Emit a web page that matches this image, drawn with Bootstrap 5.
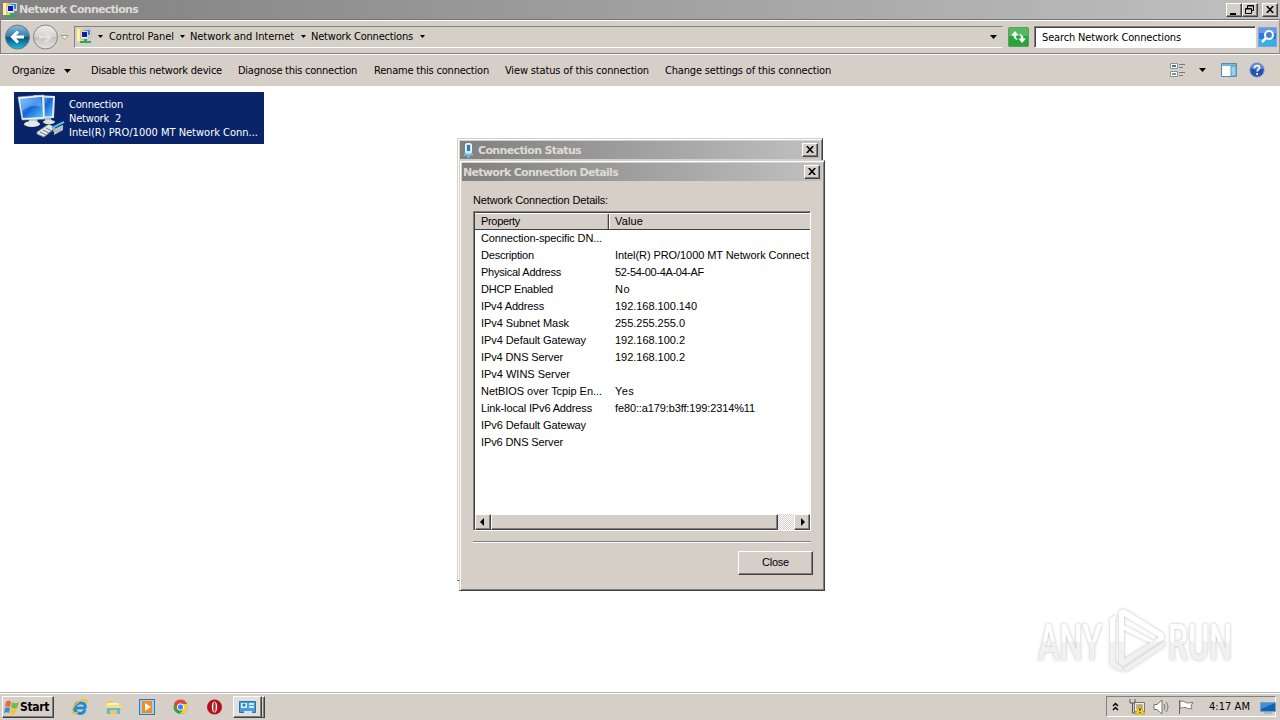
<!DOCTYPE html>
<html lang="en">
<head>
  <meta charset="UTF-8"/>
  <title>Network Connections</title>
  <meta name="viewport" content="width=device-width, initial-scale=1"/>
  <link href="https://cdn.jsdelivr.net/npm/bootstrap@5.3.0/dist/css/bootstrap.min.css" rel="stylesheet"/>
  <style>
    :root { --face: #d5cfc8; --dark: #404040; --mid: #808080; }
    body { width: 1280px; height: 720px; background: #fff; color: #000; font: 11px/14px "DejaVu Sans Condensed", "DejaVu Sans", sans-serif; }
    svg { display: block; flex: none; }
    [data-w] { display: inline-block; white-space: pre; flex: none; }
    .face { background: var(--face); }
    .caption { background: linear-gradient(90deg, #808080, #c0c0c0); color: #dedbd5; font: bold 11px/18px "DejaVu Sans", sans-serif; }
    .main-caption { height: 19px; padding-right: 2px; }
    .cap-btn { width: 16px; height: 14px; padding: 0; border-radius: 0; background: var(--face); border: 1px solid; border-color: #fff var(--dark) var(--dark) #fff; box-shadow: inset -1px -1px var(--mid); }
    .cap-btn svg { margin: auto; }
    .nav-row { height: 35px; border: 1px solid var(--mid); border-top-color: #77736f; border-right-color: #999; box-shadow: inset 0 1px #fff; padding: 0 2px 0 4px; }
    .address { width: 929px; height: 22px; margin-left: 4px; border: 1px solid; border-color: var(--mid) transparent #fff var(--mid); padding-left: 1px; background: #d5d0c6; }
    .search-box { width: 222px; height: 22px; margin-left: 5px; border: 1px solid; border-color: var(--mid) #fff #fff var(--mid); box-shadow: inset 1px 1px var(--dark); background: #fff; padding: 2px 0 0 7px; }
    .tool-row { height: 32px; border-top: 1px solid #fff; padding-left: 12px; padding-right: 15px; }
    .conn-tile { width: 250px; height: 52px; margin: 6px 0 0 14px; background: #0a246a; color: #fff; padding: 6px 0 0 3px; }
    .task-row { height: 28px; border-top: 1px solid #b9b5af; box-shadow: inset 0 1px #fff; padding: 3px 4px 2px 2px; }
    .raised { border: 1px solid; border-color: #fff var(--dark) var(--dark) #fff; box-shadow: inset -1px -1px var(--mid); background: var(--face); border-radius: 0; color: #000; }
    .start-btn { width: 52px; height: 22px; padding: 0; font: bold 12px/18px "DejaVu Sans Condensed", sans-serif; }
    .active-task { width: 29px; height: 22px; background: #e3dfda; }
    .stack-edge { width: 3px; height: 22px; border-right: 1px solid var(--dark); border-top: 1px solid #fff; border-bottom: 1px solid var(--dark); box-shadow: inset -1px 0 var(--mid); }
    .tray { width: 170px; height: 21px; border: 1px solid; border-color: var(--mid) #fff #fff var(--mid); }
    /* floating windows */
    .win { position: absolute; border: 1px solid; border-color: #d4d0c8 var(--dark) var(--dark) #d4d0c8; box-shadow: inset 1px 1px #fff, inset -1px -1px var(--mid); background: var(--face); padding: 2px; }
    .win-status { left: 457px; top: 138px; width: 366px; height: 443px; }
    .win-details { left: 459px; top: 160px; width: 366px; height: 431px; font-family: "Liberation Sans", sans-serif; }
    .win .caption { height: 18px; padding-right: 2px; }
    .win .caption span { padding-top: 1px; }
    .win .cap-btn { margin-bottom: 1px; }
    .list-box { width: 338px; height: 320px; margin-left: 11px; border: 1px solid; border-color: var(--mid) #fff #fff var(--mid); box-shadow: inset 1px 1px var(--dark); padding: 1px 0 0 1px; background: #fff; overflow: hidden; }
    .list-head { height: 17px; border-top: 1px solid #fff; border-bottom: 1px solid var(--dark); }
    .head-prop { width: 134px; border-right: 1px solid var(--dark); box-shadow: inset -1px 0 #aaa6a0; padding-left: 6px; }
    .head-value { border-left: 1px solid #fff; padding-left: 5px; }
    .list-line { height: 17px; line-height: 17px; padding-left: 6px; }
    .prop-cell { width: 134px; flex: none; }
    .bar { height: 16px; width: 335px; background: repeating-conic-gradient(#fff 0 25%, #d4d0c8 0 50%) 0 0/2px 2px; }
    .thumb { width: 287px; height: 16px; }
    .bar-btn { width: 16px; height: 16px; }
    .rule { width: 338px; height: 2px; margin: 10px 0 8px 11px; border-top: 1px solid var(--mid); border-bottom: 1px solid #fff; }
    .close-btn { width: 75px; height: 24px; padding: 0 0 2px; margin-right: 9px; font-size: 11px; line-height: 20px; }
    .watermark { position: absolute; left: 1028px; top: 600px; overflow: visible; }
  </style>
</head>
<body class="d-flex flex-column overflow-hidden position-relative">
  <svg width="0" height="0" class="position-absolute">
    <defs>
      <linearGradient id="blue" x1="0" y1="0" x2="1" y2="1"><stop stop-color="#73c5ff"/><stop offset=".5" stop-color="#1864d8"/><stop offset="1" stop-color="#5bc8fa"/></linearGradient>
      <linearGradient id="orb" x1="0" y1="0" x2="0" y2="1"><stop stop-color="#8cbdd8"/><stop offset=".48" stop-color="#357ca8"/><stop offset=".52" stop-color="#07507f"/><stop offset="1" stop-color="#24bce0"/></linearGradient>
      <linearGradient id="silver" x1="0" y1="0" x2="0" y2="1"><stop stop-color="#eee"/><stop offset=".5" stop-color="#d5d2ce"/><stop offset=".52" stop-color="#c5c1bd"/><stop offset="1" stop-color="#e7e5e2"/></linearGradient>
      <symbol id="netfolder" viewBox="0 0 16 16">
        <path d="M1 1h6l1 2v10H1z" fill="#f4d768"/><path d="M1 1h3v12H1z" fill="#fff0a4"/>
        <path d="M8 1h7v8H8z" fill="#e8e8e8" stroke="#999" stroke-width=".5"/><path d="M9 2h5v5H9z" fill="#268be8"/>
        <path d="M5 3h7v8H5z" fill="#f5f5f5" stroke="#889" stroke-width=".5"/><path d="M6 4h5v5H6z" fill="#1019b8"/>
        <path d="M8 11h3v2h4v2H4v-2h4z" fill="#22ad61"/>
      </symbol>
      <symbol id="down" viewBox="0 0 7 4"><path d="M0 0h7L3.500 4z"/></symbol>
      <symbol id="x" viewBox="0 0 8 7"><path d="M.8 0l6.400 7M7.200 0L.8 7" stroke="#000" stroke-width="1.600"/></symbol>
    </defs>
  </svg>

  <header class="caption main-caption d-flex align-items-center">
    <svg width="16" height="16" style="margin-left:2px"><use href="#netfolder"/></svg>
    <span data-w="119" style="margin-left:1px">Network Connections</span>
    <button class="btn cap-btn ms-auto"><svg width="14" height="12"><path d="M3 9h6v2H3z"/></svg></button>
    <button class="btn cap-btn"><svg width="14" height="12" fill="none" stroke="#000"><path d="M5 2h6M4.500 4V1.500h6v5H9M3 5h6M2.500 4.500h6v5h-6z"/></svg></button>
    <button class="btn cap-btn ms-1"><svg width="8" height="7"><use href="#x"/></svg></button>
  </header>

  <nav class="nav-row face d-flex align-items-center">
    <svg width="65" height="28">
      <circle cx="12.500" cy="14" r="12" fill="url(#orb)" stroke="#657987"/>
      <path d="M19 14H8M13 8.500L7.500 14l5.500 5.500" fill="none" stroke="#fff" stroke-width="3"/>
      <circle cx="40.500" cy="14" r="12" fill="url(#silver)" stroke="#868481"/>
      <path d="M34 14h11M40 8.500l5.500 5.500L40 19.500" fill="none" stroke="#e4e2df" stroke-width="2.500"/>
      <path d="M56 12.500h7l-3.500 4z" fill="#f5f3f0" stroke="#8b8883" stroke-width=".8"/>
    </svg>
    <div class="address d-flex align-items-center">
      <svg width="16" height="16" style="margin-bottom:2px"><use href="#netfolder"/></svg>
      <svg width="5" height="3" style="margin:0 6px"><use href="#down"/></svg>
      <span data-w="65">Control Panel</span>
      <svg width="5" height="3" style="margin:0 5px 0 6px"><use href="#down"/></svg>
      <span data-w="104">Network and Internet</span>
      <svg width="5" height="3" style="margin:0 5px 0 7px"><use href="#down"/></svg>
      <span data-w="102">Network Connections</span>
      <svg width="5" height="3" style="margin-left:7px"><use href="#down"/></svg>
      <svg width="7" height="4" class="ms-auto" style="margin-right:5px"><use href="#down"/></svg>
    </div>
    <svg width="21" height="20" style="margin-left:5px">
      <rect x=".5" y=".5" width="20" height="19" rx="1" fill="#29a43c" stroke="#5e9c64"/><path d="M1 1h19v8H1z" fill="#6cc573" opacity=".65"/>
      <path d="M7 4L3 8.500h2.500c0 3 2 4.500 5 4.500-2-1-2.500-2.500-2.500-4.500h2.500zM14 16l4-4.500h-2.500c0-3-2-4.500-5-4.500 2 1 2.500 2.500 2.500 4.500h-2.500z" fill="#fff"/>
    </svg>
    <div class="search-box d-flex align-items-center"><span data-w="139">Search Network Connections</span></div>
    <svg width="19" height="20" class="ms-auto">
      <rect x=".5" y=".5" width="18" height="19" fill="#3279dc" stroke="#76a7de"/><path d="M1 12h17v7H1z" fill="#37aee9"/><path d="M1 1h17v5H1z" fill="#6999e8"/>
      <circle cx="11" cy="8" r="4" fill="#4580d5" stroke="#fff" stroke-width="2"/><path d="M8 11l-4 4" stroke="#fff" stroke-width="2.500"/>
    </svg>
  </nav>

  <div class="tool-row face d-flex align-items-center">
    <span data-w="43">Organize</span>
    <svg width="7" height="4" style="margin:0 20px 0 9px"><use href="#down"/></svg>
    <span data-w="131">Disable this network device</span>
    <span data-w="119" style="margin-left:16px">Diagnose this connection</span>
    <span data-w="115" style="margin-left:17px">Rename this connection</span>
    <span data-w="144" style="margin-left:16px">View status of this connection</span>
    <span data-w="166" style="margin-left:16px">Change settings of this connection</span>
    <svg width="16" height="16" class="ms-auto" style="margin-bottom:2px"><path d="M.5 1.500h7v5h-7zM.5 9.500h7v5h-7z" fill="#fff" stroke="#8a9097"/><path d="M2 3h4v2H2z" fill="#3778aa"/><path d="M2 11h4v2H2z" fill="#82929c"/><path d="M9 2.500h6M9 5.500h4M9 10.500h6M9 13.500h4" stroke="#77787a"/></svg>
    <svg width="7" height="4" style="margin:0 15px 2px 13px"><use href="#down"/></svg>
    <svg width="16" height="14" style="margin-bottom:2px"><path d="M.5.5h15v13H.5z" fill="#fff" stroke="#4f8eb4"/><path d="M1 1h14v2H1z" fill="#75b9d8"/><path d="M10 3h5v10h-5z" fill="#9bd2ea" stroke="#5799bb"/></svg>
    <svg width="16" height="16" style="margin:0 0 2px 12px"><circle cx="8" cy="8" r="7.300" fill="#2650b5" stroke="#a5afc5"/><path d="M2 6a6 5 0 0 1 12 0c-3 2-8 2-12 0" fill="#688bd6"/><path d="M5.500 6c0-3.500 5.500-3 5 0-.2 1.500-2.300 1.500-2.300 3.500M8.200 11v2" fill="none" stroke="#fff" stroke-width="1.700"/></svg>
  </div>

  <main class="flex-grow-1 bg-white">
    <div class="conn-tile d-flex">
      <svg width="48" height="46" viewBox="0 0 48 46" style="margin-top:-5px">
        <path d="M17 2l21 1-1 22-17 1z" fill="#e0e9ef"/><path d="M19 4l17 1-1 18-15 1z" fill="url(#blue)"/>
        <path d="M12 25l8 1 1 4-9-1z" fill="#bdc8cf"/><ellipse cx="15" cy="31" rx="8" ry="3" fill="#e6eaec"/><path d="M28 25l5-1 2 4-7 1z" fill="#b6c1c8"/><ellipse cx="32" cy="29" rx="6" ry="2" fill="#dce1e4"/>
        <path d="M1 4l26-2 1 24L5 27z" fill="#eff2f3" stroke="#aebbc4" stroke-width=".6"/><path d="M3 6l22-2 1 20-20 1z" fill="url(#blue)"/><path d="M4 7l20-2 .5 9C16 11 10 14 5 18z" fill="#8fceff" opacity=".45"/>
        <path d="M20 39l12-8 6 4-11 9-7-3z" fill="#e5e6e1" stroke="#7e8c91"/><path d="M23 39l6 3m-3-5l6 3m-3-5l6 3" stroke="#647c90"/><path d="M35 35l12-6M36 38l10-5" stroke="#51bce7" stroke-width="2"/><path d="M37 36l9-4v5l-9 5z" fill="#b5bdc0"/>
      </svg>
      <div class="d-flex flex-column align-items-start" style="margin-left:4px">
        <span data-w="54">Connection</span>
        <span data-w="52">Network  2</span>
        <span data-w="189">Intel(R) PRO/1000 MT Network Conn...</span>
      </div>
    </div>
  </main>

  <footer class="task-row face d-flex">
    <button class="btn raised start-btn d-flex align-items-center">
      <svg width="17" height="17" viewBox="0 0 17 17"><path d="M3 3c2-2 4-1 5 0L7 8C5 7 4 7 2 8z" fill="#ed6739"/><path d="M9 3c2 1 4 2 7 0l-2 6c-2 1-4 1-6-1z" fill="#78b943"/><path d="M2 9c2-1 4-1 5 0l-1 5c-2-1-3-1-5 0z" fill="#3d8bd4"/><path d="M8 9c2 2 4 2 6 1l-2 5c-2 1-4 1-5-1z" fill="#f4c33b"/></svg>
      <span data-w="29">Start</span>
    </button>
    <svg width="156" height="22" viewBox="0 0 156 22" style="margin-left:16px">
      <g fill="none"><path d="M15 14c-1 3-4 4-7 3-6-3-3-11 3-10 4 0 5 3 4 5H6" stroke="#1b8bd2" stroke-width="3"/><path d="M16 4C10 2-1 13 3 17c1 1 3 0 5-1M14 5c3-2 4 0 2 3" stroke="#f1bd34" stroke-width="1.500"/></g>
      <path d="M36 5h6l1 2h8v11H36z" fill="#e9c764"/><path d="M37 7h12v3H37z" fill="#fff5b4"/><path d="M37 10h13v8h-3v-4h-7v4h-3z" fill="#5db8e3"/><path d="M36 9h15v3H36z" fill="#f7dd80"/>
      <g transform="translate(2)">
        <rect x="67.500" y="3.500" width="15" height="15" fill="#a4cfee" stroke="#267bb8"/><rect x="70" y="5" width="10" height="12" fill="#f18c22"/><path d="M73 7l6 4-6 4z" fill="#fff"/>
        <circle cx="108.500" cy="11" r="7" fill="#35a252"/><path d="M102 8a7 7 0 0 1 13 0h-7l-3 5z" fill="#df4a38"/><path d="M108 8h7c2 6-2 10-7 10l4-6z" fill="#f6cf36"/><circle cx="108.500" cy="11" r="3.200" fill="#4284ef" stroke="#fff"/>
        <circle cx="142.500" cy="11" r="7.500" fill="#b90c16"/><ellipse cx="142.500" cy="11" rx="2.700" ry="5.500" fill="#fff"/><ellipse cx="142.500" cy="11" rx="1.300" ry="5" fill="#99403f"/>
      </g>
    </svg>
    <div class="raised active-task d-flex align-items-center justify-content-center" style="margin-left:7px"><svg width="18" height="16"><path d="M.5 2.500h16v11H.5z" fill="#4e9cd5" stroke="#2774ad"/><path d="M2 4h6v5H2zM10 4h5v2h-5zM10 7h5v2h-5z" fill="#c9edff"/><circle cx="5" cy="6" r="1.500" fill="#287db8"/><path d="M5 12h8v3H5z" fill="#d6e5ed"/></svg></div>
    <div class="stack-edge"></div>
    <div class="tray d-flex align-items-center ms-auto">
      <svg width="7" height="10" style="margin-left:5px" fill="none" stroke="#000" stroke-width="1.500"><path d="M1 4l2.500-2.500L6 4M1 8l2.500-2.500L6 8"/></svg>
      <svg width="16" height="17" style="margin-left:10px"><path d="M5.500 4.500h10v9h-10z" fill="#f0eee6" stroke="#777"/><path d="M7 6h7v5H7z" fill="#bab5a7"/><path d="M1 1v4h5V1M3.500 5v10h3" fill="none" stroke="#555"/><path d="M11 7l5 9H6z" fill="#f8d52a" stroke="#ac8400" stroke-width=".6"/><path d="M11 10v3M11 14v1" stroke="#000"/></svg>
      <svg width="17" height="16" style="margin-left:8px" fill="none" stroke="#77736f"><path d="M1 5.500h3L9 1v14l-5-4.500H1z" fill="#fff"/><path d="M11 5q2 3 0 6M13 3q4 5 0 10"/></svg>
      <svg width="16" height="16" style="margin-left:8px"><path d="M1.500 1v14" stroke="#666"/><path d="M2 2.500c3-1 4 0 6 1s4 0 7 0l-2 3 1 3c-4 1-5-1-7-1s-3 0-5 1z" fill="#fff" stroke="#777"/></svg>
      <span data-w="41" style="margin-left:15px">4:17 AM</span>
      <svg width="16" height="14" style="margin-left:10px"><path d="M.5 2.500h15v9H.5z" fill="#1561b3" stroke="#71a2c9"/><path d="M1 3h14L1 9z" fill="#438fd4"/><path d="M4 13h8" stroke="#819fb6"/></svg>
    </div>
  </footer>

  <section class="win win-status">
    <div class="caption d-flex align-items-center">
      <svg width="16" height="16"><rect x="5.500" y="1.500" width="6" height="10" rx="1.500" fill="#c5e8fa" stroke="#eef6fa"/><path d="M7 3h3v6H7z" fill="#3479af"/><path d="M4 12.500h9M8.500 12v4" stroke="#76bfe5" stroke-width="2"/></svg>
      <span data-w="103" style="margin-left:2px">Connection Status</span>
      <button class="btn cap-btn ms-auto"><svg width="8" height="7"><use href="#x"/></svg></button>
    </div>
  </section>

  <section class="win win-details">
    <div class="caption d-flex align-items-center">
      <span data-w="155" style="margin-left:1px">Network Connection Details</span>
      <button class="btn cap-btn ms-auto"><svg width="8" height="7"><use href="#x"/></svg></button>
    </div>
    <div style="margin:12px 0 4px 11px"><span data-w="135">Network Connection Details:</span></div>
    <div class="list-box d-flex flex-column">
      <div class="list-head face d-flex">
        <div class="head-prop"><span data-w="39">Property</span></div>
        <div class="head-value"><span data-w="28">Value</span></div>
      </div>
      <div id="rows" class="flex-grow-1"></div>
      <div class="bar d-flex">
        <div class="raised bar-btn"><svg width="14" height="14"><path d="M8 3v8L4 7z"/></svg></div>
        <div class="raised thumb"></div>
        <div class="raised bar-btn ms-auto"><svg width="14" height="14"><path d="M6 3v8l4-4z"/></svg></div>
      </div>
    </div>
    <div class="rule"></div>
    <div class="d-flex justify-content-end"><button class="btn raised close-btn"><span data-w="27">Close</span></button></div>
  </section>

  <svg class="watermark" width="230" height="86" viewBox="0 0 230 86">
    <defs>
      <linearGradient id="mark" gradientUnits="userSpaceOnUse" x1="0" y1="20" x2="0" y2="62"><stop offset=".5" stop-color="#fff"/><stop offset=".52" stop-color="#f1f1f1"/></linearGradient>
      <filter id="soft" x="-10%" y="-20%" width="120%" height="140%"><feDropShadow dx="0" dy="0" stdDeviation="1.800" flood-color="#888" flood-opacity=".6"/></filter>
    </defs>
    <g filter="url(#soft)" fill="url(#mark)" font-family="Roboto, sans-serif" font-weight="500" font-size="50">
      <text x="10" y="60" textLength="64" lengthAdjust="spacingAndGlyphs">ANY</text>
      <text x="140" y="60" textLength="64" lengthAdjust="spacingAndGlyphs">RUN</text>
      <path fill-rule="evenodd" d="M91 11l5-2 40 25v5l-41 27-4-2zM96 16v9l30 16 5-4zM96 30v29l26-16z"/>
      <path d="M82 18l6-3v4l-1 1v42l7 5 1 5-13-6zM95 69l42-28v5L98 72z"/>
    </g>
  </svg>

  <script src="https://cdn.jsdelivr.net/npm/bootstrap@5.3.0/dist/js/bootstrap.bundle.min.js"></script>
  <script>
    // property, width, value, width
    const details = [
      ["Connection-specific DN...", 121, "", 0],
      ["Description", 53, "Intel(R) PRO/1000 MT Network Connect", 194],
      ["Physical Address", 80, "52-54-00-4A-04-AF", 89],
      ["DHCP Enabled", 72, "No", 15],
      ["IPv4 Address", 63, "192.168.100.140", 82],
      ["IPv4 Subnet Mask", 88, "255.255.255.0", 70],
      ["IPv4 Default Gateway", 105, "192.168.100.2", 70],
      ["IPv4 DNS Server", 82, "192.168.100.2", 70],
      ["IPv4 WINS Server", 89, "", 0],
      ["NetBIOS over Tcpip En...", 121, "Yes", 19],
      ["Link-local IPv6 Address", 111, "fe80::a179:b3ff:199:2314%11", 140],
      ["IPv6 Default Gateway", 105, "", 0],
      ["IPv6 DNS Server", 82, "", 0]
    ];
    document.getElementById("rows").innerHTML = details.map(([name, nw, value, vw]) =>
      `<div class="list-line d-flex"><div class="prop-cell"><span data-w="${nw}">${name}</span></div>` +
      (value ? `<span data-w="${vw}">${value}</span>` : "") + `</div>`).join("");

    // spread the letters so every label takes its own width
    document.querySelectorAll("[data-w]").forEach(el => {
      const w = Number(el.dataset.w);
      const diff = w - el.getBoundingClientRect().width;
      el.style.letterSpacing = (diff / el.textContent.length) + "px";
      el.style.width = w + "px";
    });
  </script>
</body>
</html>
